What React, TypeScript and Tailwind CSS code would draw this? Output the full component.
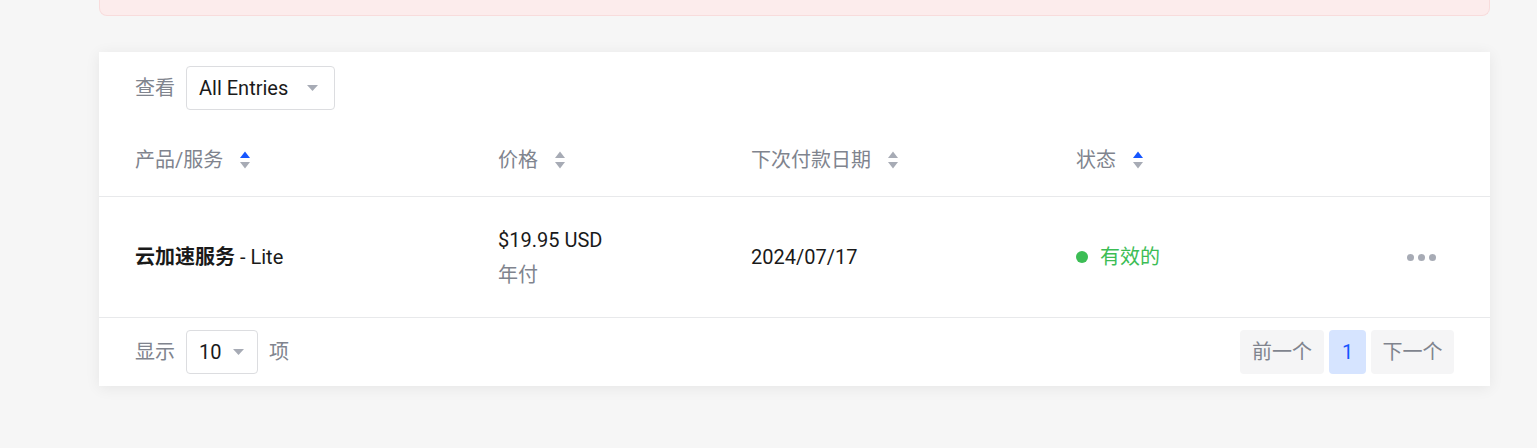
import React from 'react';

const font = { fontFamily: 'Roboto, "Noto Sans CJK SC", sans-serif' };

function SortIcon({ active }: { active?: boolean }) {
  return (
    <svg width="12" height="22" viewBox="0 0 12 22" className="ml-4 shrink-0">
      <path d="M1 9 L6 2.5 L11 9 Z" fill={active ? '#1656ff' : '#a7abb5'} />
      <path d="M1 13 L6 19.5 L11 13 Z" fill="#a7abb5" />
    </svg>
  );
}

function Caret() {
  return (
    <svg width="11" height="6" viewBox="0 0 11 6">
      <path d="M0 0 H11 L5.5 6 Z" fill="#a7abb5" />
    </svg>
  );
}

export default function App() {
  return (
    <div className="min-h-[448px] bg-[#f6f6f6] text-[20px]" style={font}>
      <div className="mx-[99px] w-[1391px]">
        {/* alert remnant */}
        <div className="h-4 rounded-b-lg border border-t-0 border-[#f8dcdc] bg-[#fcecec]" />

        {/* card */}
        <div className="mt-9 bg-white shadow-[0_2px_14px_rgba(0,0,0,0.07)]">
          <div className="flex h-[72px] items-center gap-[11px] px-9">
            <span className="text-[#80848e]">查看</span>
            <div className="flex h-[44px] w-[149px] items-center justify-between rounded border border-[#dcdde0] pl-3 pr-4">
              <span className="text-[#1a1a1a]">All Entries</span>
              <Caret />
            </div>
          </div>

          {/* header */}
          <div className="grid h-[73px] grid-cols-[363px_253px_325px_1fr] items-center border-b border-[#e8e9eb] px-9 text-[#80848e]">
            <div className="flex items-center">产品/服务<SortIcon active /></div>
            <div className="flex items-center">价格<SortIcon /></div>
            <div className="flex items-center">下次付款日期<SortIcon /></div>
            <div className="flex items-center">状态<SortIcon active /></div>
          </div>

          {/* row */}
          <div className="grid h-[121px] grid-cols-[363px_253px_325px_1fr] items-center border-b border-[#e8e9eb] px-9 text-[#1a1a1a]">
            <div>
              <span className="font-bold">云加速服务</span> - Lite
            </div>
            <div className="flex flex-col gap-[11px]">
              <span className="leading-6">$19.95 USD</span>
              <span className="leading-6 text-[#80848e]">年付</span>
            </div>
            <div>2024/07/17</div>
            <div className="flex items-center justify-between pr-[18px]">
              <div className="flex items-center gap-3 text-[#3cbd55]">
                <span className="h-3 w-3 rounded-full bg-[#3cbd55]" />
                有效的
              </div>
              <div className="flex gap-[4px]">
                <span className="h-[7px] w-[7px] rounded-full bg-[#a7abb5]" />
                <span className="h-[7px] w-[7px] rounded-full bg-[#a7abb5]" />
                <span className="h-[7px] w-[7px] rounded-full bg-[#a7abb5]" />
              </div>
            </div>
          </div>

          {/* footer */}
          <div className="flex h-[68px] items-center justify-between px-9">
            <div className="flex items-center gap-[11px] text-[#80848e]">
              <span>显示</span>
              <div className="flex h-[44px] w-[72px] items-center gap-3 rounded border border-[#dcdde0] pl-3">
                <span className="text-[#1a1a1a]">10</span>
                <Caret />
              </div>
              <span>项</span>
            </div>
            <div className="flex items-center gap-[5px]">
              <button className="h-[44px] w-[84px] rounded bg-[#f5f5f6] text-[#80848e]">前一个</button>
              <button className="h-[44px] w-[37px] rounded bg-[#d6e4ff] text-[#1656ff]">1</button>
              <button className="h-[44px] w-[83px] rounded bg-[#f5f5f6] text-[#80848e]">下一个</button>
            </div>
          </div>
        </div>
      </div>
    </div>
  );
}
